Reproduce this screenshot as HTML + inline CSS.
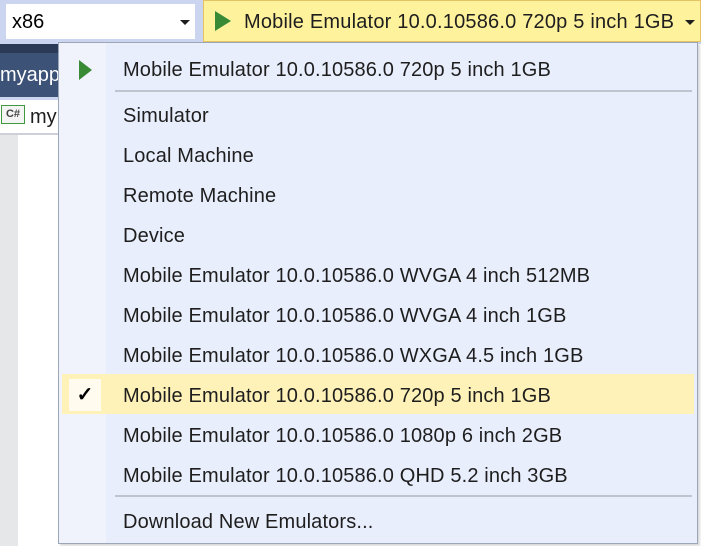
<!DOCTYPE html><html><head><style>
body{margin:0;width:701px;height:546px;overflow:hidden;background:#fff;font-family:"Liberation Sans",sans-serif;position:relative}
div{position:absolute;box-sizing:border-box}
.it{left:64px;font-size:20px;letter-spacing:0.15px;color:#1e1e1e;white-space:nowrap}
</style></head><body>
<div style="left:0;top:0;width:701px;height:44px;background:#ccd5f0"></div>
<div style="left:5px;top:3px;width:191px;height:37px;background:#fff;border:1px solid #ccd5f0"></div>
<div style="left:12px;top:11px;font-size:20px">x86</div>
<div style="left:180px;top:20px;width:0;height:0;border-left:5px solid transparent;border-right:5px solid transparent;border-top:5px solid #1e1e1e"></div>
<div style="left:203px;top:0;width:498px;height:42px;background:#fff29d;border:1px solid #e5c365"></div>
<svg style="position:absolute;left:214px;top:10px" width="18" height="22"><polygon points="1,1 17,11 1,21" fill="#388a34"/></svg>
<div style="left:244px;top:11px;font-size:20px;letter-spacing:0.2px;color:#1e1e1e;white-space:nowrap">Mobile Emulator 10.0.10586.0 720p 5 inch 1GB</div>
<div style="left:685px;top:20px;width:0;height:0;border-left:5px solid transparent;border-right:5px solid transparent;border-top:5px solid #1e1e1e"></div>
<div style="left:0;top:44px;width:60px;height:9px;background:#2b3a57"></div>
<div style="left:0;top:53px;width:60px;height:44px;background:#3d5277"></div>
<div style="left:0;top:64px;font-size:20px;color:#fff">myapp</div>
<div style="left:0;top:97px;width:60px;height:3px;background:#ccd5f0"></div>
<div style="left:0;top:133px;width:60px;height:2px;background:#ccd0d8"></div>
<div style="left:0;top:135px;width:18px;height:411px;background:#e6e7e8"></div>
<div style="left:1px;top:105px;width:24px;height:19px;border:1px solid #3f9a3f;background:#f4f4f4;font-size:11px;font-weight:bold;color:#444;text-align:center;line-height:17px">C#</div>
<div style="left:30px;top:106px;font-size:20px;color:#1e1e1e">my</div>
<div style="left:58px;top:42px;width:640px;height:502px;background:#e9eefc;border:1px solid #9ba7b7;box-shadow:2px 2px 2px rgba(0,0,0,.15)">
<div style="left:0;top:0;width:47px;height:500px;background:#f0f2fc"></div>
<svg style="position:absolute;left:19px;top:16px" width="16" height="22"><polygon points="1,1 14,11 1,21" fill="#388a34"/></svg>
<div style="left:56px;top:47px;width:577px;height:2px;background:#c0c4cf"></div>
<div style="left:56px;top:452px;width:577px;height:2px;background:#c0c4cf"></div>
<div style="left:3px;top:331px;width:632px;height:40px;background:#fff2b8"></div>
<div style="left:10px;top:336px;width:32px;height:32px;background:#fffbef;font-size:20px;font-weight:bold;text-align:center;line-height:32px">✓</div>
<div class="it" style="top:16px">Mobile Emulator 10.0.10586.0 720p 5 inch 1GB</div>
<div class="it" style="top:62px">Simulator</div>
<div class="it" style="top:102px">Local Machine</div>
<div class="it" style="top:142px">Remote Machine</div>
<div class="it" style="top:182px">Device</div>
<div class="it" style="top:222px">Mobile Emulator 10.0.10586.0 WVGA 4 inch 512MB</div>
<div class="it" style="top:262px">Mobile Emulator 10.0.10586.0 WVGA 4 inch 1GB</div>
<div class="it" style="top:302px">Mobile Emulator 10.0.10586.0 WXGA 4.5 inch 1GB</div>
<div class="it" style="top:342px">Mobile Emulator 10.0.10586.0 720p 5 inch 1GB</div>
<div class="it" style="top:382px">Mobile Emulator 10.0.10586.0 1080p 6 inch 2GB</div>
<div class="it" style="top:422px">Mobile Emulator 10.0.10586.0 QHD 5.2 inch 3GB</div>
<div class="it" style="top:468px">Download New Emulators...</div>
</div>
</body></html>
